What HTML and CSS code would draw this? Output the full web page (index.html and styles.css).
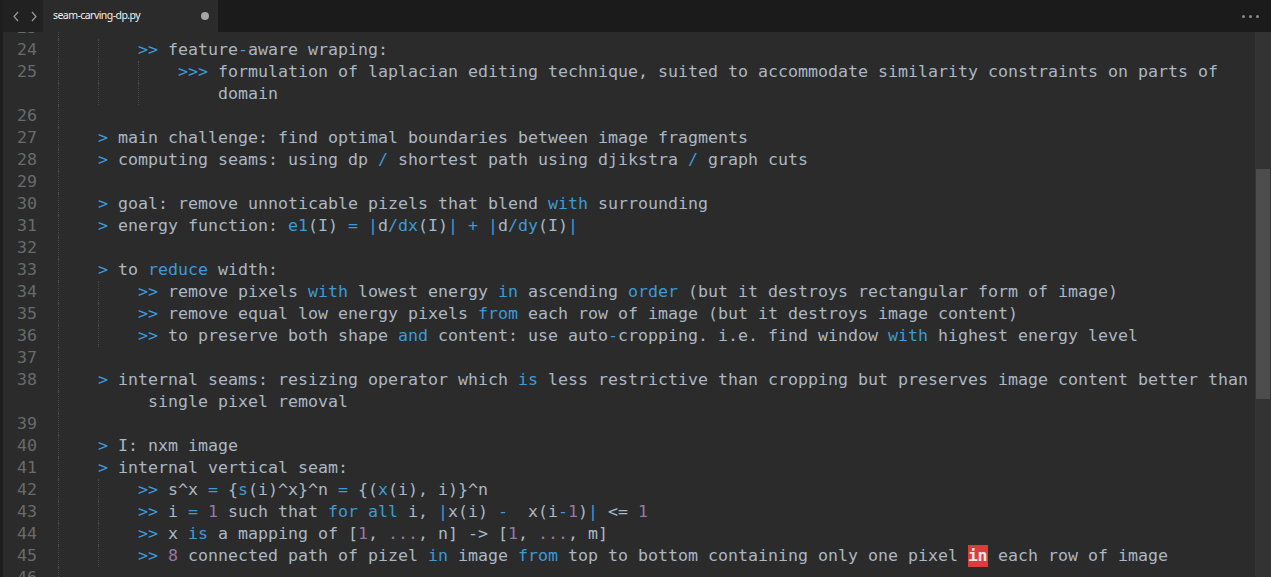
FILE: index.html
```html
<!DOCTYPE html>
<html>
<head>
<meta charset="utf-8">
<link rel="stylesheet" href="styles.css">
</head>
<body>
<div class="app">
  <div class="edge"></div>
  <div class="window">
    <div class="tabbar">
      <div class="nav">
        <svg width="8" height="11" viewBox="0 0 8 11"><path d="M6 1 L2 5.5 L6 10" fill="none" stroke="#9a9a9a" stroke-width="1.2"/></svg>
        <svg width="8" height="11" viewBox="0 0 8 11"><path d="M2 1 L6 5.5 L2 10" fill="none" stroke="#9a9a9a" stroke-width="1.2"/></svg>
      </div>
      <div class="tab">
        <span class="tab-name">seam-carving-dp.py</span>
        <span class="dirty"></span>
      </div>
      <div class="tab-fill"></div>
      <div class="more"><span></span><span></span><span></span></div>
    </div>
    <div class="editor">
      <div class="content">
        <div class="lines">
          <div class="row"><div class="ln">23</div><div class="code"><i class="g"></i></div></div>
          <div class="row"><div class="ln">24</div><div class="code"><i class="g"></i><i class="g"></i><span class="t"><b>&gt;&gt;</b> feature<b>-</b>aware wraping:</span></div></div>
          <div class="row"><div class="ln">25</div><div class="code"><i class="g"></i><i class="g"></i><i class="g"></i><span class="t"><b>&gt;&gt;&gt;</b> formulation of laplacian editing technique, suited to accommodate similarity constraints on parts of</span></div></div>
          <div class="row"><div class="ln"></div><div class="code"><i class="g"></i><i class="g"></i><i class="g"></i><span class="t">    domain</span></div></div>
          <div class="row"><div class="ln">26</div><div class="code"><i class="g"></i></div></div>
          <div class="row"><div class="ln">27</div><div class="code"><i class="g"></i><span class="t"><b>&gt;</b> main challenge: find optimal boundaries between image fragments</span></div></div>
          <div class="row"><div class="ln">28</div><div class="code"><i class="g"></i><span class="t"><b>&gt;</b> computing seams: using dp <b>/</b> shortest path using djikstra <b>/</b> graph cuts</span></div></div>
          <div class="row"><div class="ln">29</div><div class="code"><i class="g"></i></div></div>
          <div class="row"><div class="ln">30</div><div class="code"><i class="g"></i><span class="t"><b>&gt;</b> goal: remove unnoticable pizels that blend <b>with</b> surrounding</span></div></div>
          <div class="row"><div class="ln">31</div><div class="code"><i class="g"></i><span class="t"><b>&gt;</b> energy function: <b>e1</b>(I) <b>=</b> <b>|</b>d<b>/dx</b>(I)<b>|</b> <b>+</b> <b>|</b>d<b>/dy</b>(I)<b>|</b></span></div></div>
          <div class="row"><div class="ln">32</div><div class="code"><i class="g"></i></div></div>
          <div class="row"><div class="ln">33</div><div class="code"><i class="g"></i><span class="t"><b>&gt;</b> to <b>reduce</b> width:</span></div></div>
          <div class="row"><div class="ln">34</div><div class="code"><i class="g"></i><i class="g"></i><span class="t"><b>&gt;&gt;</b> remove pixels <b>with</b> lowest energy <b>in</b> ascending <b>order</b> (but it destroys rectangular form of image)</span></div></div>
          <div class="row"><div class="ln">35</div><div class="code"><i class="g"></i><i class="g"></i><span class="t"><b>&gt;&gt;</b> remove equal low energy pixels <b>from</b> each row of image (but it destroys image content)</span></div></div>
          <div class="row"><div class="ln">36</div><div class="code"><i class="g"></i><i class="g"></i><span class="t"><b>&gt;&gt;</b> to preserve both shape <b>and</b> content: use auto<b>-</b>cropping. i.e. find window <b>with</b> highest energy level</span></div></div>
          <div class="row"><div class="ln">37</div><div class="code"><i class="g"></i></div></div>
          <div class="row"><div class="ln">38</div><div class="code"><i class="g"></i><span class="t"><b>&gt;</b> internal seams: resizing operator which <b>is</b> less restrictive than cropping but preserves image content better than</span></div></div>
          <div class="row"><div class="ln"></div><div class="code"><i class="g"></i><span class="t">     single pixel removal</span></div></div>
          <div class="row"><div class="ln">39</div><div class="code"><i class="g"></i></div></div>
          <div class="row"><div class="ln">40</div><div class="code"><i class="g"></i><span class="t"><b>&gt;</b> I: nxm image</span></div></div>
          <div class="row"><div class="ln">41</div><div class="code"><i class="g"></i><span class="t"><b>&gt;</b> internal vertical seam:</span></div></div>
          <div class="row"><div class="ln">42</div><div class="code"><i class="g"></i><i class="g"></i><span class="t"><b>&gt;&gt;</b> s^x <b>=</b> {<b>s</b>(i)^x}^n <b>=</b> {(<b>x</b>(i), i)}^n</span></div></div>
          <div class="row"><div class="ln">43</div><div class="code"><i class="g"></i><i class="g"></i><span class="t"><b>&gt;&gt;</b> i <b>=</b> <u>1</u> such that <b>for</b> <b>all</b> i, <b>|</b>x(i) <b>-</b>  x(i<b>-</b><u>1</u>)<b>|</b> &lt;= <u>1</u></span></div></div>
          <div class="row"><div class="ln">44</div><div class="code"><i class="g"></i><i class="g"></i><span class="t"><b>&gt;&gt;</b> x <b>is</b> a mapping of [<u>1</u>, <u>...</u>, n] -&gt; [<u>1</u>, <u>...</u>, m]</span></div></div>
          <div class="row"><div class="ln">45</div><div class="code"><i class="g"></i><i class="g"></i><span class="t"><b>&gt;&gt;</b> <u>8</u> connected path of pizel <b>in</b> image <b>from</b> top to bottom containing only one pixel <span class="hl">in</span> each row of image</span></div></div>
          <div class="row"><div class="ln">46</div><div class="code"><i class="g"></i></div></div>
        </div>
      </div>
      <div class="scrollbar"><div class="thumb"></div></div>
    </div>
  </div>
</div>
</body>
</html>
```

FILE: styles.css
```css
html, body {
  margin: 0;
  padding: 0;
  background: #2b2b2b;
  overflow: hidden;
}

.app {
  display: flex;
  width: 1271px;
  height: 577px;
}

.edge {
  width: 3px;
  background: #1e1e1e;
  flex: none;
}

.window {
  flex: 1;
  display: flex;
  flex-direction: column;
  min-width: 0;
}

.tabbar {
  height: 32px;
  display: flex;
  flex: none;
  background: #1b1b1b;
}

.nav {
  width: 40px;
  display: flex;
  align-items: center;
  gap: 10px;
  padding-left: 9px;
  box-sizing: border-box;
  background: #212121;
}

.tab {
  width: 175px;
  display: flex;
  align-items: center;
  justify-content: space-between;
  padding: 0 9px 0 10px;
  box-sizing: border-box;
  background: #2b2b2b;
}

.tab-name {
  font-family: "Noto Sans", "Open Sans", sans-serif;
  font-size: 10.5px;
  color: #f0f0f0;
  letter-spacing: -0.55px;
  position: relative;
  top: -1px;
}

.dirty {
  width: 8px;
  height: 8px;
  border-radius: 50%;
  background: #a5a5a5;
}

.tab-fill {
  flex: 1;
}

.more {
  display: flex;
  align-items: center;
  gap: 4px;
  padding-right: 12px;
}

.more span {
  width: 3px;
  height: 3px;
  border-radius: 50%;
  background: #8a8a8a;
}

.editor {
  flex: 1;
  display: flex;
  overflow: hidden;
  background: #2b2b2b;
}

.content {
  flex: 1;
  overflow: hidden;
  min-width: 0;
}

.lines {
  margin-top: -15px;
}

.row {
  display: flex;
  height: 22px;
  font-family: "DejaVu Sans Mono", "Liberation Mono", monospace;
  font-size: 16.61px;
  line-height: 22px;
}

.ln {
  width: 55px;
  flex: none;
  box-sizing: border-box;
  padding-right: 21px;
  text-align: right;
  color: #6a6a6a;
}

.code {
  flex: 1;
  display: flex;
  min-width: 0;
}

.g {
  display: block;
  width: 40px;
  height: 22px;
  flex: none;
  box-sizing: border-box;
  border-left: 1px dotted #4c4c4c;
}

.t {
  white-space: pre;
  color: #a9b7c6;
}

.t b {
  font-weight: normal;
  color: #3c9ad8;
}

.t u {
  text-decoration: none;
  color: #9876aa;
}

.hl {
  background: #e03b3b;
  color: #f0e6e6;
  font-weight: bold;
  display: inline-block;
  height: 22px;
  width: 20px;
  letter-spacing: -0.5px;
}

.scrollbar {
  width: 16px;
  flex: none;
  background: #333333;
  position: relative;
}

.thumb {
  margin: 137px 1px 0 1px;
  height: 230px;
  background: #4d4d4d;
}
```
